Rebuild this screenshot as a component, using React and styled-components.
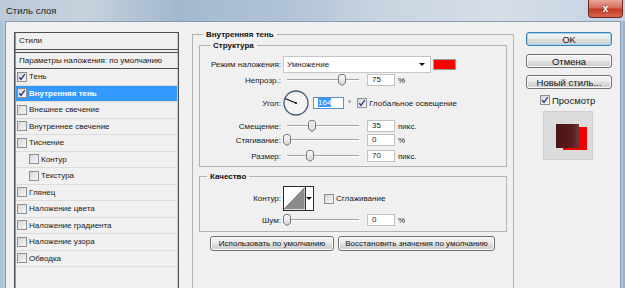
import styled, { createGlobalStyle } from "styled-components";

const Global = createGlobalStyle`
  html, body { margin: 0; padding: 0; }
  body {
    width: 625px;
    height: 288px;
    overflow: hidden;
    font-family: "Liberation Sans", Arial, sans-serif;
    color: #1a1a1a;
  }
`;

const Window = styled.div`
  width: 625px;
  height: 288px;
  display: flex;
  flex-direction: column;
  background: linear-gradient(90deg, #bccad9 0%, #c6d1dd 14%, #a3b8cf 28%, #b0c2d6 45%, #cad5e1 62%, #d6dee7 80%, #c3d2e3 100%);
`;

const TitleBar = styled.div`
  height: 21px;
  display: flex;
  justify-content: space-between;
  align-items: flex-start;
  flex-shrink: 0;
`;

const Title = styled.span`
  font-size: 9.5px;
  line-height: 21px;
  padding-left: 6px;
  color: #1e1e1e;
`;

const CloseBtn = styled.div`
  width: 35px;
  height: 18px;
  margin-right: 2px;
  box-sizing: border-box;
  border: 1px solid #6e2a22;
  border-top: none;
  border-radius: 0 0 4px 4px;
  background: linear-gradient(#e6a79a 0%, #d46f5e 45%, #c23a25 55%, #d9664e 100%);
  color: #fff;
  font-size: 10px;
  font-weight: bold;
  display: flex;
  align-items: center;
  justify-content: center;
  text-shadow: 0 0 2px #6e2a22;
`;

const Frame = styled.div`
  flex: 1;
  display: flex;
  padding: 0 5px 0 5px;
  background: linear-gradient(90deg, #a9bfd6 0px, #b8cbe0 5px, #b8cbe0 calc(100% - 5px), #8fb0d4 100%);
`;

const Client = styled.div`
  flex: 1;
  display: flex;
  align-items: flex-start;
  padding: 10px 8px 0 8px;
  background: #f0f0f0;
  border: 1px solid #8a9bb0;
  border-bottom: none;
`;

/* left styles list */
const StylesPanel = styled.div`
  width: 165px;
  height: 270px;
  flex-shrink: 0;
  box-sizing: border-box;
  border: 1px solid #4f4f4f;
  box-shadow: inset 1px 0 0 #9a9a9a, inset -1px 0 0 #c8c8c8;
  display: flex;
  flex-direction: column;
  font-size: 8px;
`;

const PanelHead = styled.div`
  height: 16px;
  line-height: 16px;
  padding-left: 4px;
  border-bottom: 1px solid #4f4f4f;
  margin-bottom: 2px;
`;

const PanelParams = styled.div`
  height: 15px;
  line-height: 15px;
  padding-left: 4px;
  border-top: 1px solid #4f4f4f;
  border-bottom: 1px solid #4f4f4f;
`;

const StyleRow = styled.div`
  height: 16.5px;
  box-sizing: border-box;
  display: flex;
  align-items: center;
  gap: 2px;
  margin: 0 1px;
  padding-left: ${(p) => (p.$sub ? 13 : 1)}px;
  border-bottom: 1px solid #dcdcdc;
  font-weight: ${(p) => (p.$selected ? "bold" : "normal")};
  background: ${(p) => (p.$selected ? "#3399ff" : "transparent")};
  color: ${(p) => (p.$selected ? "#fff" : "#1a1a1a")};
`;

const Box = styled.span`
  width: 10px;
  height: 10px;
  flex-shrink: 0;
  box-sizing: border-box;
  border: 1px solid #8e8f8f;
  background: linear-gradient(135deg, #d6d6d6, #f8f8f8);
  display: flex;
  align-items: center;
  justify-content: center;
  margin-left: ${(p) => p.$ml || 0}px;
`;

const Check = ({ on, ml }) => (
  <Box $ml={ml}>
    {on && (
      <svg width="8" height="8" viewBox="0 0 8 8">
        <path d="M1.2 4.2 L3 6.3 L6.8 1.2" fill="none" stroke="#2a3f8f" strokeWidth="1.4" />
      </svg>
    )}
  </Box>
);

/* middle settings */
const Group = styled.fieldset`
  margin: ${(p) => p.$m || 0};
  min-width: 0;
  box-sizing: border-box;
  width: ${(p) => p.$w}px;
  height: ${(p) => (p.$h ? `${p.$h}px` : "auto")};
  border: 1px solid #b2b2b2;
  padding: ${(p) => p.$pad || "0"};
  flex-shrink: 0;
`;

const Legend = styled.legend`
  margin-left: ${(p) => p.$indent}px;
  padding: 0 3px;
  font-size: 8px;
  line-height: 11px;
  font-weight: bold;
  color: #111;
`;

const Row = styled.div`
  display: flex;
  align-items: center;
  height: ${(p) => p.$h}px;
  margin-top: ${(p) => p.$mt || 0}px;
  font-size: 8px;
`;

const Label = styled.span`
  width: 81px;
  flex-shrink: 0;
  text-align: right;
  margin-right: 2px;
`;

const Select = styled.div`
  width: 148px;
  height: 17px;
  box-sizing: border-box;
  border: 1px solid #c6c6c6;
  background: #fff;
  display: flex;
  align-items: center;
  justify-content: space-between;
  padding: 0 5px 0 3px;
`;

const Arrow = styled.span`
  width: 0;
  height: 0;
  border-left: 3px solid transparent;
  border-right: 3px solid transparent;
  border-top: 3px solid #111;
`;

const Swatch = styled.div`
  width: 23px;
  height: 11px;
  margin-left: 2px;
  box-sizing: border-box;
  border: 1px solid #9a9a9a;
  background: #ff0000;
`;

const SliderWrap = styled.div`
  position: relative;
  width: 80px;
  height: 14px;
  flex-shrink: 0;
`;

const Track = styled.div`
  position: absolute;
  left: 4px;
  right: 4px;
  top: 6px;
  height: 0;
  border-top: 1px solid #a3a3a3;
  border-bottom: 1px solid #ffffff;
`;

const Thumb = styled.svg`
  position: absolute;
  top: 1px;
`;

const Slider = ({ frac }) => (
  <SliderWrap>
    <Track />
    <Thumb width="8" height="12" viewBox="0 0 8 12" style={{ left: `${frac * 72}px` }}>
      <defs>
        <linearGradient id="thg" x1="0" y1="0" x2="0" y2="1">
          <stop offset="0" stopColor="#fdfdfd" />
          <stop offset="1" stopColor="#d2d2d2" />
        </linearGradient>
      </defs>
      <path d="M0.5 3 Q0.5 0.5 3 0.5 H5 Q7.5 0.5 7.5 3 V9 L4 11.5 L0.5 9 Z" fill="url(#thg)" stroke="#7a7a7a" />
    </Thumb>
  </SliderWrap>
);

const Field = styled.div`
  width: ${(p) => p.$w || 28}px;
  height: 12px;
  box-sizing: border-box;
  border: 1px solid ${(p) => (p.$focus ? "#5b8fc7" : "#c2c2c2")};
  background: #fff;
  margin-left: ${(p) => p.$ml ?? 4}px;
  padding-left: 4px;
  line-height: 10px;
  flex-shrink: 0;
`;

const Selected = styled.span`
  background: #3399ff;
  color: #fff;
`;

const Unit = styled.span`
  margin-left: ${(p) => p.$ml ?? 3}px;
`;

const Dial = () => (
  <svg width="26" height="26" viewBox="0 0 26 26">
    <circle cx="13" cy="13" r="12" fill="#f3f3f3" stroke="#4d5a78" strokeWidth="1.3" />
    <line x1="13" y1="13" x2="1.8" y2="8.5" stroke="#111" strokeWidth="1.1" />
    <circle cx="13" cy="13" r="1.1" fill="#111" />
  </svg>
);

const ContourBox = styled.div`
  width: 31px;
  height: 25px;
  box-sizing: border-box;
  border: 1px solid #2a2a2a;
  background: #fff;
  display: flex;
`;

const ContourArrow = styled.div`
  width: 8px;
  border-left: 1px solid #2a2a2a;
  display: flex;
  align-items: center;
  justify-content: center;
`;

const Btn = styled.div`
  height: ${(p) => p.$h || 15}px;
  width: ${(p) => (p.$w ? `${p.$w}px` : "auto")};
  box-sizing: border-box;
  border: 1px solid ${(p) => (p.$primary ? "#3c7fb1" : "#707070")};
  border-radius: 3px;
  background: linear-gradient(#f3f3f3 0%, #ebebeb 48%, #dddddd 52%, #cfcfcf 100%);
  box-shadow: ${(p) => (p.$primary ? "inset 0 0 0 1px #9fd3f5" : "inset 0 0 0 1px #fbfbfb")};
  display: flex;
  align-items: center;
  justify-content: center;
  font-size: ${(p) => p.$fs || 8}px;
  margin-top: ${(p) => p.$mt || 0}px;
  color: #151515;
  flex-shrink: 0;
`;

const BtnRow = styled.div`
  display: flex;
  gap: 4px;
  margin: 4px 0 0 11px;
`;

/* right column */
const Side = styled.div`
  width: 86px;
  margin-left: 12px;
  display: flex;
  flex-direction: column;
  flex-shrink: 0;
`;

const PreviewCheck = styled.label`
  display: flex;
  align-items: center;
  gap: 2px;
  height: 10px;
  margin: 6px 0 0 14px;
  font-size: 9.5px;
`;

const Preview = styled.div`
  width: 50px;
  height: 49px;
  margin: 6px 0 0 17px;
  box-sizing: border-box;
  border: 1px solid #cfcfcf;
  background: #dcdcdc;
`;

const styles = [
  { name: "Тень", on: true },
  { name: "Внутренняя тень", on: true, selected: true },
  { name: "Внешнее свечение" },
  { name: "Внутреннее свечение" },
  { name: "Тиснение" },
  { name: "Контур", sub: true },
  { name: "Текстура", sub: true },
  { name: "Глянец" },
  { name: "Наложение цвета" },
  { name: "Наложение градиента" },
  { name: "Наложение узора" },
  { name: "Обводка" },
];

const App = () => {
  return (
    <Window>
      <Global />
      <TitleBar>
        <Title>Стиль слоя</Title>
        <CloseBtn>x</CloseBtn>
      </TitleBar>
      <Frame>
        <Client>
          <StylesPanel>
            <PanelHead>Стили</PanelHead>
            <PanelParams>Параметры наложения: по умолчанию</PanelParams>
            {styles.map((s) => (
              <StyleRow key={s.name} $sub={s.sub} $selected={s.selected}>
                <Check on={s.on} />
                {s.name}
              </StyleRow>
            ))}
          </StylesPanel>

          <Group $w={322} $h={270} $m="-3px 0 0 13px" $pad="0 6px">
            <Legend $indent={4}>Внутренняя тень</Legend>

            <Group $w={308} $pad="0 0 3px 0">
              <Legend $indent={10}>Структура</Legend>
              <Row $h={18} $mt={4}>
                <Label>Режим наложения:</Label>
                <Select>
                  Умножение
                  <Arrow />
                </Select>
                <Swatch />
              </Row>
              <Row $h={14}>
                <Label>Непрозр.:</Label>
                <Slider frac={0.76} />
                <Field>75</Field>
                <Unit>%</Unit>
              </Row>
              <Row $h={26} $mt={3}>
                <Label>Угол:</Label>
                <Dial />
                <Field $w={31} $focus $ml={4}>
                  <Selected>164</Selected>
                </Field>
                <Unit $ml={4}>°</Unit>
                <Check on ml={6} />
                <Unit $ml={2}>Глобальное освещение</Unit>
              </Row>
              <Row $h={14} $mt={3}>
                <Label>Смещение:</Label>
                <Slider frac={0.35} />
                <Field>35</Field>
                <Unit>пикс.</Unit>
              </Row>
              <Row $h={14}>
                <Label>Стягивание:</Label>
                <Slider frac={0} />
                <Field>0</Field>
                <Unit>%</Unit>
              </Row>
              <Row $h={14} $mt={2}>
                <Label>Размер:</Label>
                <Slider frac={0.32} />
                <Field>70</Field>
                <Unit>пикс.</Unit>
              </Row>
            </Group>

            <Group $w={308} $m="4px 0 0 0" $pad="0 0 5px 0">
              <Legend $indent={7}>Качество</Legend>
              <Row $h={25} $mt={4}>
                <Label>Контур:</Label>
                <ContourBox>
                  <svg width="22" height="23" viewBox="0 0 22 23">
                    <path d="M0 23 L22 0 L22 23 Z" fill="#8c8c8c" />
                    <path d="M0 23 L22 0" stroke="#555" strokeWidth="0.8" />
                  </svg>
                  <ContourArrow>
                    <Arrow />
                  </ContourArrow>
                </ContourBox>
                <Check ml={10} />
                <Unit $ml={2}>Сглаживание</Unit>
              </Row>
              <Row $h={12} $mt={3}>
                <Label>Шум:</Label>
                <Slider frac={0} />
                <Field>0</Field>
                <Unit>%</Unit>
              </Row>
            </Group>

            <BtnRow>
              <Btn $w={124}>Использовать по умолчанию</Btn>
              <Btn $w={157}>Восстановить значения по умолчанию</Btn>
            </BtnRow>
          </Group>

          <Side>
            <Btn $h={14} $fs={9.5} $primary>OK</Btn>
            <Btn $h={14} $fs={9.5} $mt={8}>Отмена</Btn>
            <Btn $h={14} $fs={9.5} $mt={7}>Новый стиль...</Btn>
            <PreviewCheck>
              <Check on />
              Просмотр
            </PreviewCheck>
            <Preview>
              <svg width="48" height="47" viewBox="0 0 48 47">
                <defs>
                  <linearGradient id="inner" x1="0" y1="0" x2="1" y2="0">
                    <stop offset="0" stopColor="#4a1414" />
                    <stop offset="0.7" stopColor="#5a1c1c" />
                    <stop offset="1" stopColor="#6e3a3a" />
                  </linearGradient>
                </defs>
                <rect x="19" y="15" width="24" height="23" fill="#f00000" />
                <rect x="12" y="12" width="23" height="24" fill="url(#inner)" />
              </svg>
            </Preview>
          </Side>
        </Client>
      </Frame>
    </Window>
  );
};

export default App;
